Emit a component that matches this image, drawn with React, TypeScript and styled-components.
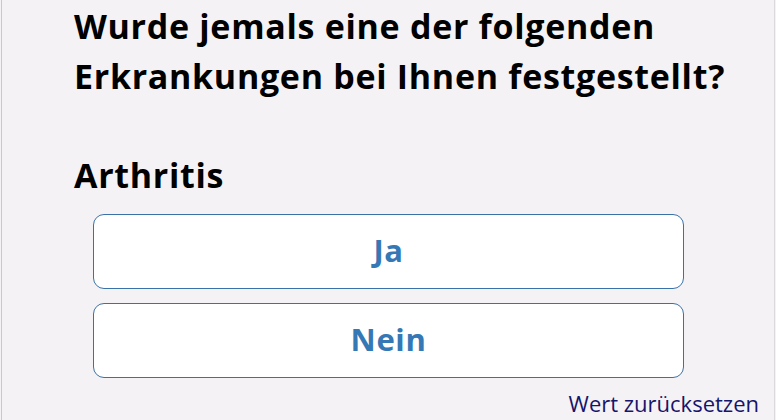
import React from "react";
import styled, { createGlobalStyle } from "styled-components";

const GlobalStyle = createGlobalStyle`
  html, body {
    margin: 0;
    padding: 0;
    background: #f5f2f6;
  }
  body {
    font-family: "Open Sans", "Noto Sans", sans-serif;
  }
`;

const Frame = styled.div`
  box-sizing: border-box;
  width: 776px;
  height: 420px;
  overflow: hidden;
  padding-left: 1px;
  padding-right: 1px;
`;

const Panel = styled.div`
  box-sizing: border-box;
  height: 100%;
  background: #f5f2f6;
  border-left: 1px solid #c9c9c9;
  border-right: 1px solid #dcd9dc;
  padding: 1px 15px 0 72px;
  display: flex;
  flex-direction: column;
`;

const Question = styled.h1`
  margin: 0;
  font-size: 34px;
  line-height: 50px;
  letter-spacing: 0.7px;
  font-weight: 700;
  color: #000;
`;

const ItemLabel = styled.h2`
  margin: 49px 0 0;
  font-size: 34px;
  line-height: 50px;
  letter-spacing: 0.7px;
  font-weight: 700;
  color: #000;
`;

const Options = styled.div`
  display: flex;
  flex-direction: column;
  gap: 14px;
  margin: 14px 75px 0 19px;
`;

const Option = styled.button`
  box-sizing: border-box;
  height: 75px;
  padding: 0 0 4px;
  border: 1px solid #3a72a8;
  border-radius: 11px;
  background: #fff;
  color: #3478b5;
  font-family: inherit;
  font-size: 31px;
  letter-spacing: 0.6px;
  font-weight: 700;
  cursor: pointer;
`;

const ResetLink = styled.a`
  align-self: flex-end;
  margin-top: 10px;
  font-size: 22px;
  line-height: 30px;
  color: #15156b;
  text-decoration: none;
  cursor: pointer;
`;

export default function App() {
  return (
    <>
      <GlobalStyle />
      <Frame>
        <Panel>
          <Question>
            Wurde jemals eine der folgenden Erkrankungen bei Ihnen festgestellt?
          </Question>
          <ItemLabel>Arthritis</ItemLabel>
          <Options>
            <Option>Ja</Option>
            <Option>Nein</Option>
          </Options>
          <ResetLink>Wert zurücksetzen</ResetLink>
        </Panel>
      </Frame>
    </>
  );
}
